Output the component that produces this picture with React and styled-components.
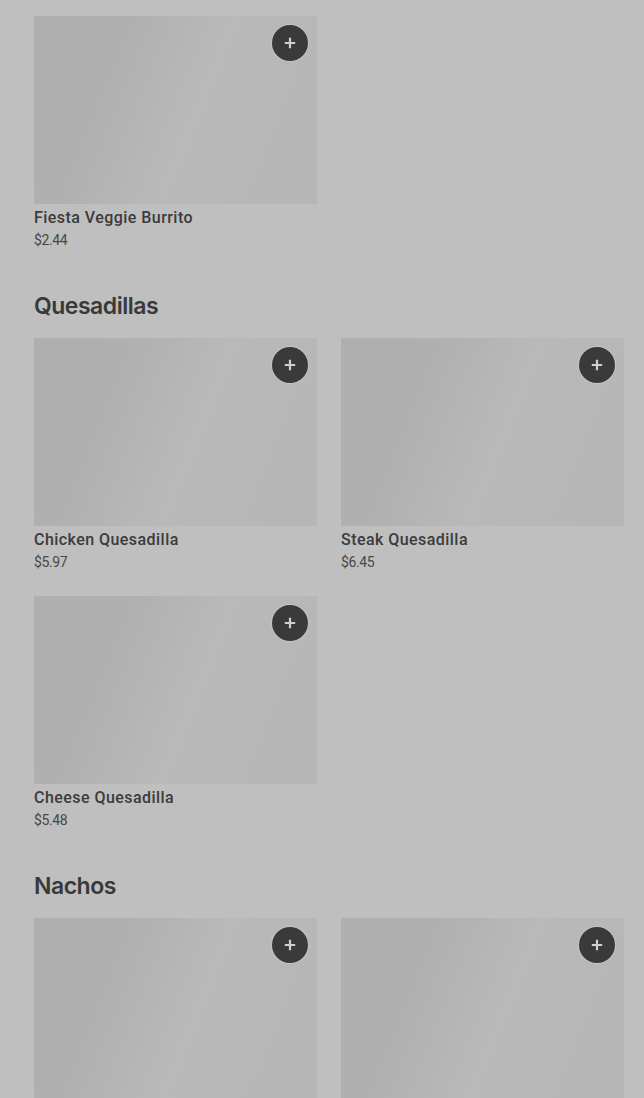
import React from "react";
import styled, { createGlobalStyle } from "styled-components";

const Global = createGlobalStyle`
  html, body { margin: 0; padding: 0; background: #bfbfbf; }
  body { font-family: Inter, "Noto Sans", Roboto, sans-serif; overflow: hidden; }
`;

const Page = styled.div`
  padding: 16px 20px 0 34px;
  background: #bfbfbf;
  height: 1098px;
  overflow: hidden;
  box-sizing: border-box;
`;

const Section = styled.section`
  display: flex;
  flex-direction: column;
  & + & { margin-top: 40px; }
`;

const Heading = styled.h2`
  margin: 0 0 16px;
  font-family: Inter, "Noto Sans", sans-serif;
  font-size: 23px;
  line-height: 32px;
  font-weight: 600;
  letter-spacing: -0.5px;
  color: #393939;
`;

const Grid = styled.div`
  display: grid;
  grid-template-columns: 283px 283px;
  column-gap: 24px;
  row-gap: 24px;
`;

const Card = styled.div`
  display: flex;
  flex-direction: column;
  height: 234px;
`;

const Thumb = styled.div`
  position: relative;
  height: 188px;
  background: linear-gradient(112deg, #afafaf 0%, #b0b0b0 28%, #b9b9b9 55%, #b7b7b7 80%, #b6b6b6 100%);
`;

const AddButton = styled.button`
  position: absolute;
  top: 9px;
  right: 9px;
  width: 36px;
  height: 36px;
  border-radius: 50%;
  border: none;
  padding: 0;
  background: #3a3a3a;
  box-shadow: 0 0 0 1px rgba(205, 205, 205, 0.6);
  display: flex;
  align-items: center;
  justify-content: center;
`;

const Name = styled.div`
  margin-top: 4px;
  font-family: Roboto, "Noto Sans", sans-serif;
  font-size: 16px;
  line-height: 20px;
  font-weight: 500;
  letter-spacing: 0.45px;
  color: #3b3b3b;
`;

const Price = styled.div`
  margin-top: 2px;
  font-family: Roboto, "Noto Sans", sans-serif;
  font-size: 14px;
  line-height: 20px;
  letter-spacing: -0.4px;
  color: #474747;
`;

const Plus = () => (
  <svg width="14" height="14" viewBox="0 0 14 14">
    <path d="M7 1.8v10.4M1.8 7h10.4" stroke="#cfcfcf" strokeWidth="2.2" />
  </svg>
);

const Item = ({ name, price }) => (
  <Card>
    <Thumb>
      <AddButton aria-label="Add">
        <Plus />
      </AddButton>
    </Thumb>
    {name && <Name>{name}</Name>}
    {price && <Price>{price}</Price>}
  </Card>
);

const sections = [
  { title: null, items: [{ id: "fvb", name: "Fiesta Veggie Burrito", price: "$2.44" }] },
  {
    title: "Quesadillas",
    items: [
      { id: "cq", name: "Chicken Quesadilla", price: "$5.97" },
      { id: "sq", name: "Steak Quesadilla", price: "$6.45" },
      { id: "chq", name: "Cheese Quesadilla", price: "$5.48" },
    ],
  },
  {
    title: "Nachos",
    items: [{ id: "n1" }, { id: "n2" }],
  },
];

export default function App() {
  return (
    <>
      <Global />
      <Page>
        {sections.map((s, i) => (
          <Section key={i}>
            {s.title && <Heading>{s.title}</Heading>}
            <Grid>
              {s.items.map((it) => (
                <Item key={it.id} name={it.name} price={it.price} />
              ))}
            </Grid>
          </Section>
        ))}
      </Page>
    </>
  );
}
